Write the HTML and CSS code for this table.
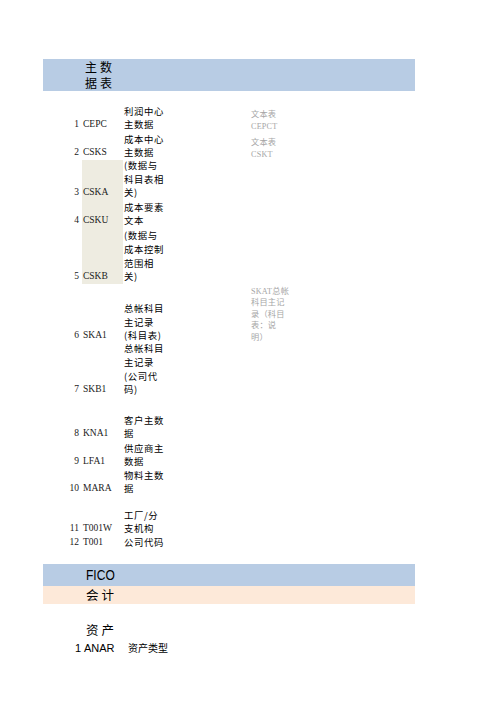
FILE: index.html
```html
<!DOCTYPE html>
<html>
<head>
<meta charset="utf-8">
<link rel="stylesheet" href="styles.css">
</head>
<body>
<div class="sheet">
  <div class="band blue head"><div class="title">主数<br>据表</div></div>
  <div class="row h14"></div>
  <div class="row h27"><div class="num">1</div><div class="code">CEPC</div><div class="desc">利润中心<br>主数据</div><div class="note">文本表<br>CEPCT</div></div>
  <div class="row h28"><div class="num">2</div><div class="code">CSKS</div><div class="desc">成本中心<br>主数据</div><div class="note">文本表<br>CSKT</div></div>
  <div class="row h40"><div class="num">3</div><div class="code tan">CSKA</div><div class="desc">(数据与<br>科目表相<br>关)</div></div>
  <div class="row h28"><div class="num">4</div><div class="code tan">CSKU</div><div class="desc">成本要素<br>文本</div></div>
  <div class="row h56"><div class="num">5</div><div class="code tan">CSKB</div><div class="desc">(数据与<br>成本控制<br>范围相<br>关)</div></div>
  <div class="row h59"><div class="num">6</div><div class="code">SKA1</div><div class="desc">总帐科目<br>主记录<br>(科目表)</div><div class="note">SKAT总帐<br>科目主记<br>录（科目<br>表：说<br>明）</div></div>
  <div class="row h54"><div class="num">7</div><div class="code">SKB1</div><div class="desc">总帐科目<br>主记录<br>(公司代<br>码)</div></div>
  <div class="row h44"><div class="num">8</div><div class="code">KNA1</div><div class="desc">客户主数<br>据</div></div>
  <div class="row h28"><div class="num">9</div><div class="code">LFA1</div><div class="desc">供应商主<br>数据</div></div>
  <div class="row h27"><div class="num">10</div><div class="code">MARA</div><div class="desc">物料主数<br>据</div></div>
  <div class="row h40"><div class="num">11</div><div class="code">T001W</div><div class="desc">工厂/分<br>支机构</div></div>
  <div class="row h14"><div class="num">12</div><div class="code">T001</div><div class="desc">公司代码</div></div>
  <div class="row h14"></div>
  <div class="band blue fico"><div class="fico-text">FICO</div></div>
  <div class="band peach"><div class="title2">会计</div></div>
  <div class="row h34 sec"><div class="title2">资产</div></div>
  <div class="row h18 last"><div class="num2">1</div><div class="code2">ANAR</div><div class="desc2">资产类型</div></div>
</div>
</body>
</html>
```
FILE: styles.css
```css
html, body {
  margin: 0;
  padding: 0;
  background: #ffffff;
}
body {
  width: 496px;
  height: 702px;
  overflow: hidden;
  font-family: "Noto Sans CJK SC", sans-serif;
  color: #000;
}
.sheet {
  margin-left: 43px;
  padding-top: 59px;
  width: 372px;
}
.band {
  display: flex;
  align-items: center;
}
.blue { background: #b8cce4; }
.peach { background: #fde9d9; height: 18px; }
.head { height: 32px; }
.title {
  margin-left: 42px;
  font-size: 12px;
  line-height: 16px;
  letter-spacing: 3px;
}
.fico { height: 22px; }
.fico-text {
  margin-left: 43px;
  font-family: "Liberation Sans Narrow", "Liberation Sans", sans-serif;
  font-stretch: condensed;
  font-size: 14px;
  line-height: 22px;
  display: inline-block;
  transform: scaleX(0.86);
  transform-origin: left center;
}
.title2 {
  margin-left: 43px;
  font-size: 12.5px;
  line-height: 16px;
  letter-spacing: 3px;
}
.row {
  display: flex;
  align-items: flex-end;
}
.h14 { height: 14px; }
.h18 { height: 18px; }
.h27 { height: 27px; }
.h28 { height: 28px; }
.h34 { height: 34px; }
.h40 { height: 40px; }
.h44 { height: 44px; }
.h54 { height: 54px; }
.h56 { height: 56px; }
.h59 { height: 59px; }
.num {
  width: 36px;
  padding-right: 3px;
  text-align: right;
  font-family: "Liberation Serif", serif;
  font-size: 9.5px;
  line-height: 13.7px;
  color: #1a1a1a;
}
.code {
  width: 40px;
  padding-left: 1px;
  align-self: stretch;
  display: flex;
  align-items: flex-end;
  font-family: "Liberation Serif", serif;
  font-size: 9.5px;
  line-height: 13.7px;
  color: #1a1a1a;
}
.tan { background: #eeece1; }
.desc {
  width: 125px;
  padding-left: 1px;
  font-size: 9.4px;
  letter-spacing: 0.6px;
  line-height: 13.7px;
  color: #000;
}
.note {
  padding-left: 2px;
  font-family: "Liberation Serif", "Noto Sans CJK SC", serif;
  font-size: 8.2px;
  letter-spacing: 0.2px;
  line-height: 11.5px;
  color: #a6a6a6;
}
.num2 {
  width: 38px;
  text-align: right;
  font-family: "Liberation Sans", sans-serif;
  font-size: 11px;
  line-height: 16px;
}
.code2 {
  width: 44px;
  padding-left: 3px;
  font-family: "Liberation Sans", sans-serif;
  font-size: 11px;
  line-height: 16px;
}
.desc2 {
  font-size: 10px;
  line-height: 16px;
}
```
